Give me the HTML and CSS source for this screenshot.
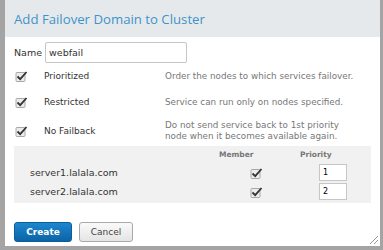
FILE: index.html
```html
<!DOCTYPE html>
<html lang="en">
<head>
    <meta charset="UTF-8">
    <title>Add Failover Domain to Cluster</title>
    <link rel="stylesheet" href="styles.css">
</head>
<body>
    <div class="dialog">
        <div class="dialog-header">
            <h2>Add Failover Domain to Cluster</h2>
        </div>
        <div class="dialog-body">
            <div class="name-row">
                <label for="name">Name</label>
                <input type="text" id="name" class="name-input" value="webfail">
            </div>
            <div class="option-row">
                <svg class="check" viewBox="0 0 13 12"><rect x="1" y="2.5" width="9" height="9" rx="1" fill="#ececec" stroke="#a8a8a8"/><path d="M2.5 6.5 L5.2 9.2 L11.5 2" fill="none" stroke="#333" stroke-width="1.8"/></svg>
                <span class="option-label">Prioritized</span>
                <span class="option-desc">Order the nodes to which services failover.</span>
            </div>
            <div class="option-row">
                <svg class="check" viewBox="0 0 13 12"><rect x="1" y="2.5" width="9" height="9" rx="1" fill="#ececec" stroke="#a8a8a8"/><path d="M2.5 6.5 L5.2 9.2 L11.5 2" fill="none" stroke="#333" stroke-width="1.8"/></svg>
                <span class="option-label">Restricted</span>
                <span class="option-desc">Service can run only on nodes specified.</span>
            </div>
            <div class="option-row tall">
                <svg class="check" viewBox="0 0 13 12"><rect x="1" y="2.5" width="9" height="9" rx="1" fill="#ececec" stroke="#a8a8a8"/><path d="M2.5 6.5 L5.2 9.2 L11.5 2" fill="none" stroke="#333" stroke-width="1.8"/></svg>
                <span class="option-label">No Failback</span>
                <span class="option-desc">Do not send service back to 1st priority<br>node when it becomes available again.</span>
            </div>

            <div class="nodes">
                <div class="node-row head">
                    <span class="node-name"></span>
                    <span class="node-member">Member</span>
                    <span class="node-priority">Priority</span>
                </div>
                <div class="node-row">
                    <span class="node-name">server1.lalala.com</span>
                    <span class="node-member"><svg class="check" viewBox="0 0 13 12"><rect x="1" y="2.5" width="9" height="9" rx="1" fill="#ececec" stroke="#a8a8a8"/><path d="M2.5 6.5 L5.2 9.2 L11.5 2" fill="none" stroke="#333" stroke-width="1.8"/></svg></span>
                    <span class="node-priority"><input type="text" class="prio-input" value="1"></span>
                </div>
                <div class="node-row">
                    <span class="node-name">server2.lalala.com</span>
                    <span class="node-member"><svg class="check" viewBox="0 0 13 12"><rect x="1" y="2.5" width="9" height="9" rx="1" fill="#ececec" stroke="#a8a8a8"/><path d="M2.5 6.5 L5.2 9.2 L11.5 2" fill="none" stroke="#333" stroke-width="1.8"/></svg></span>
                    <span class="node-priority"><input type="text" class="prio-input" value="2"></span>
                </div>
            </div>

            <div class="actions">
                <button type="button" class="btn btn-primary">Create</button>
                <button type="button" class="btn">Cancel</button>
            </div>
        </div>
        <div class="grip"></div>
    </div>
</body>
</html>
```

FILE: styles.css
```css
body {
    margin: 0;
    background-color: #a4a4a4;
    font-family: "DejaVu Sans", sans-serif;
    font-size: 9px;
    color: #333;
}
.dialog {
    position: relative;
    margin-left: 5px;
    width: 375px;
    height: 246px;
    background-color: #ffffff;
}
.dialog-header {
    height: 37px;
    background-color: #e6e9ec;
    display: flex;
    align-items: center;
    padding-left: 9px;
}
.dialog-header h2 {
    margin: 0;
    font-family: "Open Sans", sans-serif;
    font-weight: normal;
    font-size: 13.2px;
    color: #3f93ca;
}
.dialog-body {
    padding: 5px 9px 0 9px;
}
.name-row {
    display: flex;
    align-items: center;
    gap: 3px;
    height: 21px;
    font-size: 9.5px;
}
.name-input {
    width: 142px;
    height: 21px;
    box-sizing: border-box;
    border: 1px solid #c6c6c6;
    border-radius: 2px;
    padding: 0 3px;
    font-family: "DejaVu Sans", sans-serif;
    font-size: 9.5px;
    color: #333;
}
.option-row {
    display: flex;
    align-items: center;
    height: 26px;
}
.option-row.tall {
    height: 31px;
}
.check {
    display: block;
    width: 13px;
    height: 12px;
    margin-left: 1px;
}
.option-label {
    width: 121px;
    padding-left: 16px;
}
.option-desc {
    white-space: nowrap;
    font-size: 8.8px;
    color: #777;
    line-height: 11px;
}
.nodes {
    background-color: #f1f1f1;
    padding: 0 0 2px 0;
}
.node-row {
    display: flex;
    align-items: center;
    height: 19px;
}
.node-row.head {
    height: 17px;
    font-size: 7.5px;
    font-weight: bold;
    color: #777;
}
.node-name {
    width: 189px;
    padding-left: 16px;
    font-size: 9.5px;
}
.node-member {
    width: 81px;
}
.node-member .check {
    margin-left: 31px;
}
.node-priority {
    flex: 1;
}
.prio-input {
    margin-left: 19px;
    width: 28px;
    height: 17px;
    box-sizing: border-box;
    border: 1px solid #c6c6c6;
    padding: 0 3px;
    font-family: "DejaVu Sans", sans-serif;
    font-size: 8px;
}
.actions {
    display: flex;
    gap: 7px;
    margin-top: 19px;
}
.btn {
    width: 54px;
    height: 20px;
    padding: 0;
    border: 1px solid #a9a9a9;
    border-radius: 3px;
    background: linear-gradient(#fafafa, #e4e4e4);
    font-family: "DejaVu Sans", sans-serif;
    font-size: 9px;
    color: #444;
}
.btn-primary {
    width: 58px;
    border-color: #0b5e9c;
    background: linear-gradient(#1d86cf, #0c64a6);
    color: #fff;
    font-weight: bold;
}
.grip {
    position: absolute;
    right: 2px;
    bottom: 2px;
    width: 8px;
    height: 8px;
    background: linear-gradient(135deg, transparent 45%, #999 45%, #999 55%, transparent 55%, transparent 70%, #999 70%, #999 80%, transparent 80%);
}
```
